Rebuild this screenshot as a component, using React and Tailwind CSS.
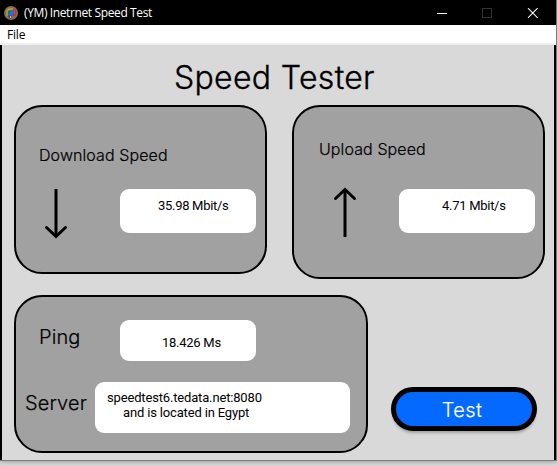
const inter = "font-['Inter',sans-serif] text-black whitespace-nowrap";
const label = `${inter} font-light tracking-[0.006em] [-webkit-text-stroke:0.2px_#000]`;

function AppIcon() {
  return (
    <svg width="14" height="14" viewBox="0 0 14 14" fill="none">
      <circle cx="7" cy="7" r="7" fill="#86695f" />
      <path d="M4 4.5h6v5.5H4z" fill="#4a5a68" />
      <path d="M3 10V4.8L5 3.2" stroke="#7fc41c" strokeWidth="1.3" />
      <path d="M4 3.4L9 2.8" stroke="#c8b020" strokeWidth="1.2" />
      <path d="M9 2.8l2.5 1.7v4.8L9.5 10" stroke="#e02b1c" strokeWidth="1.3" />
      <path d="M10.2 3.8L5.4 6.6v2.6h3.4z" fill="#1b74f8" />
      <path d="M4.5 10h3.5l-1 2.3H5.2z" fill="#222" />
      <path d="M5.8 10.2h1.4v1.6H5.8z" fill="#eee" />
    </svg>
  );
}

function TitleBar() {
  return (
    <header className="flex h-[25px] items-center bg-black pl-1">
      <AppIcon />
      <span className="ml-[6px] font-['Open_Sans','Noto_Sans',sans-serif] text-[12px] leading-[16px] tracking-[-0.38px] whitespace-nowrap text-white">
        (YM) Inetrnet Speed Test
      </span>
      <div className="mr-[18px] ml-auto flex items-center gap-[35px]">
        <svg width="10" height="10" viewBox="0 0 10 10"><path d="M0 5.5h10" stroke="#fff" /></svg>
        <svg width="10" height="10" viewBox="0 0 10 10"><path d="M.5.5h9v9h-9z" fill="none" stroke="#333" /></svg>
        <svg width="11" height="10" viewBox="0 0 11 10"><path d="M1 .2l9.6 9.6M10.6.2L1 9.8" stroke="#fff" strokeWidth="1.1" /></svg>
      </div>
    </header>
  );
}

function Arrow({ up }) {
  return (
    <svg width="24" height="50" viewBox="0 0 24 50" fill="none" stroke="#000" strokeWidth="3" className={up ? "rotate-180" : ""}>
      <path d="M12 0v47" />
      <path d="M2.5 38.5l9.5 9 9.5-9" strokeLinecap="round" />
    </svg>
  );
}

function Value({ className, children }) {
  return (
    <div className={`rounded-[9px] bg-white font-['Roboto',sans-serif] text-[13px] leading-[15px] whitespace-nowrap text-black ${className}`}>
      {children}
    </div>
  );
}

export default function App() {
  return (
    <div className="flex h-[466px] w-[557px] flex-col overflow-hidden bg-[#dcdcdc]">
      <div className="flex h-[461px] flex-col border-r border-b border-[#7b7b7b] shadow-[0_1px_5px_rgba(0,0,0,0.3)]">
        <TitleBar />
        <nav className="h-5 border-b-2 border-[#f0f0f0] bg-white pl-[7px] font-['Open_Sans','Noto_Sans',sans-serif] text-[12px] leading-[19px] tracking-[-0.2px] text-black">
          File
        </nav>
        <main className="flex h-[415px] flex-col border-x-2 border-black bg-[#d9d9d9] pr-[9px] pl-3">
          <h1 className={`${inter} h-[60px] pt-[13px] pl-[160px] text-[32px] leading-[40px] font-light tracking-[0.01em] [-webkit-text-stroke:0.35px_#000]`}>
            Speed Tester
          </h1>
          <div className="flex h-[190px] items-start justify-between">
            <section className="h-[169px] w-[253px] rounded-[28px] border-2 border-black bg-[#a1a1a1] pt-[38px] pl-[23px]">
              <h2 className={`${label} text-[16px] leading-[20px]`}>Download Speed</h2>
              <div className="mt-6 flex pl-[5px]">
                <Arrow />
                <Value className="ml-[52px] h-[44px] w-[136px] pt-[9px] pl-[38px] tracking-[-0.3px]">35.98 Mbit/s</Value>
              </div>
            </section>
            <section className="h-[174px] w-[253px] rounded-[28px] border-2 border-black bg-[#a1a1a1] pt-8 pl-[25px]">
              <h2 className={`${label} text-[16px] leading-[20px]`}>Upload Speed</h2>
              <div className="mt-[28px] flex pl-[14px]">
                <Arrow up />
                <Value className="mt-[2px] ml-[42px] h-[44px] w-[136px] pt-[9px] pl-[43px] tracking-[-0.28px]">4.71 Mbit/s</Value>
              </div>
            </section>
          </div>
          <div className="flex">
            <section className="h-[158px] w-[354px] rounded-[28px] border-2 border-black bg-[#a1a1a1] pt-[23px] pl-[9px]">
              <div className="flex pl-[14px]">
                <h2 className={`${label} w-[81px] pt-[5px] text-[20px] leading-[24px]`}>Ping</h2>
                <Value className="h-[41px] w-[136px] pt-[15px] pl-[42px] tracking-[-0.26px]">18.426 Ms</Value>
              </div>
              <div className="mt-[21px] flex">
                <h2 className={`${label} w-[70px] pt-[9px] text-[20px] leading-[24px]`}>Server</h2>
                <Value className="h-[51px] w-[255px] pt-2 pl-3 tracking-[-0.16px]">
                  <p>speedtest6.tedata.net:8080</p>
                  <p className="pl-4">and is located in Egypt</p>
                </Value>
              </div>
            </section>
            <button className="mt-[92px] ml-[23px] h-[44px] w-[146px] rounded-full border-[5px] border-black bg-[#0469ff] pt-px pr-[4px] font-['Inter',sans-serif] text-[20px] leading-[34px] font-light tracking-[0.02em] text-white shadow-[0_3px_3px_-1px_rgba(0,0,0,0.25)] [-webkit-text-stroke:0.15px_#fff]">
              Test
            </button>
          </div>
        </main>
      </div>
    </div>
  );
}
